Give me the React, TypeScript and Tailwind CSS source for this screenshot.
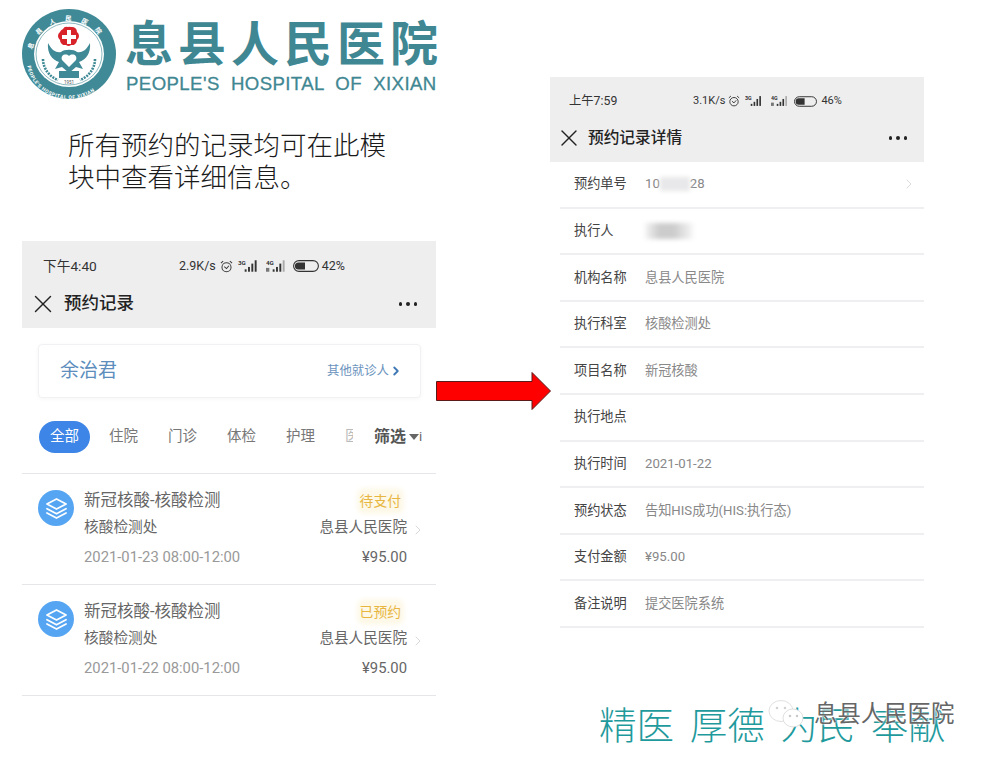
import { X, ChevronRight } from 'lucide-react';

const SANS = "font-['Roboto','Noto_Sans_CJK_SC',sans-serif]";

interface RecordItem {
  status: string;
  date: string;
}

const records: RecordItem[] = [
  { status: '待支付', date: '2021-01-23 08:00-12:00' },
  { status: '已预约', date: '2021-01-22 08:00-12:00' },
];

const detailRows = [
  { label: '机构名称', value: '息县人民医院' },
  { label: '执行科室', value: '核酸检测处' },
  { label: '项目名称', value: '新冠核酸' },
  { label: '执行地点', value: '' },
  { label: '执行时间', value: '2021-01-22' },
  { label: '预约状态', value: '告知HIS成功(HIS:执行态)' },
  { label: '支付金额', value: '¥95.00' },
  { label: '备注说明', value: '提交医院系统' },
];

function Logo() {
  return (
    <svg viewBox="0 0 94 90" className="w-[94px] h-[90px] shrink-0">
      <defs>
        <path id="topArc" d="M10 47 A37 35 0 0 1 84 47" />
        <path id="bottomArc" d="M5 52 A42 38 0 0 0 89 52" />
      </defs>
      <ellipse cx="47" cy="45" rx="47" ry="45" fill="#3f8a96" />
      <ellipse cx="47" cy="45" rx="35" ry="33" fill="#fff" />
      <ellipse cx="47" cy="45" rx="33" ry="31" fill="none" stroke="#3f8a96" strokeWidth="0.6" />
      <text fontSize="6.5" fill="#fff" fontWeight="700" letterSpacing="9">
        <textPath href="#topArc" startOffset="6">息县人民医院</textPath>
      </text>
      <text fontSize="5" fill="#fff" fontWeight="700" letterSpacing="0.5">
        <textPath href="#bottomArc" startOffset="5">PEOPLE'S HOSPITAL OF XIXIAN</textPath>
      </text>
      <path
        d="M41 20 a4 4 0 0 1 5 -2 a4 4 0 0 1 3 0 a5 5 0 0 1 6 5 a5 5 0 0 1 0 8 a5 5 0 0 1 -6 5 a4 4 0 0 1 -5 0 a5 5 0 0 1 -6 -5 a5 5 0 0 1 0 -8 a5 5 0 0 1 3 -3z"
        fill="#d9232a"
      />
      <path d="M45 21h4v5h5v4h-5v5h-4v-5h-5v-4h5z" fill="#fff" />
      <path
        d="M26 34 C25 44 30 51 37 53 L33 60 L40 58 L47 64 L54 58 L61 60 L57 53 C64 51 69 44 68 34 C64 42 59 44 55 43 C52 40 42 40 39 43 C35 44 30 42 26 34z"
        fill="#3f8a96"
      />
      <path d="M47 58 L40 51 C38 46 44 44 47 47 C50 44 56 46 54 51z" fill="#fff" />
      <rect x="37" y="62" width="20" height="7" fill="#3f8a96" />
      <text x="47" y="75" textAnchor="middle" fontSize="4.5" fill="#555">1951</text>
      <path d="M21 50 C21 60 28 68 36 71" fill="none" stroke="#3f8a96" strokeWidth="2.6" strokeDasharray="2 1" />
      <path d="M73 50 C73 60 66 68 58 71" fill="none" stroke="#3f8a96" strokeWidth="2.6" strokeDasharray="2 1" />
    </svg>
  );
}

function Alarm({ className }: { className: string }) {
  return (
    <svg viewBox="0 0 14 14" className={className} fill="none" stroke="#3a3a3a" strokeWidth="1.1">
      <circle cx="7" cy="7.8" r="4.9" />
      <path d="M4.6 7.2l2.4 2 2.6-3" />
      <path d="M1 3.4L3.4 1.2M13 3.4L10.6 1.2" />
    </svg>
  );
}

function Signal({ tag, dim, className }: { tag: string; dim?: boolean; className: string }) {
  return (
    <svg viewBox="0 0 22 14" className={className}>
      <text x="0" y="6" fontSize="6.5" fontWeight="700" fill="#333">{tag}</text>
      <rect x="7" y="10.5" width="2" height="2.5" fill="#333" />
      <rect x="10.5" y="8" width="2" height="5" fill="#333" />
      <rect x="14" y="4.5" width="2" height="8.5" fill="#333" />
      <rect x="17.5" y="1" width="2" height="12" fill={dim ? '#aaa' : '#333'} />
      {dim ? <rect x="0" y="9" width="3.5" height="4" fill="#777" /> : null}
    </svg>
  );
}

function Battery({ className }: { className: string }) {
  return (
    <svg viewBox="0 0 26 12" className={className}>
      <rect x="0.6" y="0.6" width="24.8" height="10.8" rx="5.4" fill="none" stroke="#333" strokeWidth="1.1" />
      <path d="M5.5 2.4h6.5v7.2h-6.5a3.6 3.6 0 0 1 0-7.2z" fill="#333" />
    </svg>
  );
}

function TopBar({ time, speed, battery, title, small }: {
  time: string;
  speed: string;
  battery: string;
  title: string;
  small?: boolean;
}) {
  return (
    <div className={small ? 'bg-[#eeeeef] pl-[19px] pr-[17px] pb-[11px]' : 'bg-[#eeeeef] pl-[21px] pr-[19px] pb-[11px]'}>
      <div className={small ? 'h-[48px] flex items-center text-[#333] text-[11px]' : 'h-[50px] flex items-center text-[#333] text-[12.5px]'}>
        <span className={small ? 'w-[124px] shrink-0 text-[12.3px]' : 'w-[136px] shrink-0 text-[13.7px]'}>{time}</span>
        <span>{speed}</span>
        {small ? (
          <span className="flex items-center ml-[3px]">
            <Alarm className="w-[12px] h-[12px]" />
            <Signal tag="3G" className="w-[18px] h-[12px] ml-[5px]" />
            <Signal tag="4G" dim className="w-[18px] h-[12px] ml-[8px]" />
            <Battery className="w-[23px] h-[11px] ml-[5px]" />
          </span>
        ) : (
          <span className="flex items-center ml-[4px]">
            <Alarm className="w-[13px] h-[13px]" />
            <Signal tag="3G" className="w-[21px] h-[14px] ml-[5px]" />
            <Signal tag="4G" dim className="w-[21px] h-[14px] ml-[7px]" />
            <Battery className="w-[26px] h-[12px] ml-[6px]" />
          </span>
        )}
        <span className={small ? 'ml-[4px]' : 'ml-[3px]'}>{battery}</span>
      </div>
      <div className="h-[26px] flex items-center">
        <X className={small ? 'w-[28px] h-[28px] text-[#222] -ml-[14px] shrink-0' : 'w-[30px] h-[30px] text-[#222] -ml-[15.5px] shrink-0'} strokeWidth={1.15} />
        <span className={small ? 'ml-[5px] text-[15.7px] font-medium text-[#222] leading-none' : 'ml-[6.5px] text-[17.5px] font-medium text-[#222] leading-none'}>{title}</span>
        <span className="ml-auto flex gap-[4px]">
          <i className="w-[3.5px] h-[3.5px] rounded-full bg-[#222]" />
          <i className="w-[3.5px] h-[3.5px] rounded-full bg-[#222]" />
          <i className="w-[3.5px] h-[3.5px] rounded-full bg-[#222]" />
        </span>
      </div>
    </div>
  );
}

function StackIcon() {
  return (
    <div className="w-[36px] h-[36px] rounded-full bg-[#55a5f2] flex items-center justify-center shrink-0">
      <svg viewBox="0 0 24 24" className="w-[27px] h-[27px]" fill="none" stroke="#fff" strokeWidth="1.5" strokeLinejoin="round" strokeLinecap="round">
        <path d="M12 3.5l8.5 4.5-8.5 4.5-8.5-4.5z" />
        <path d="M3.5 12.2l8.5 4.5 8.5-4.5" />
        <path d="M3.5 16l8.5 4.5 8.5-4.5" />
      </svg>
    </div>
  );
}

function RecordCard({ item }: { item: RecordItem }) {
  return (
    <div className="h-[111px] border-b border-[#e6e6ea] pl-[16px] pt-[16px] flex relative">
      <StackIcon />
      <div className="ml-[10px] flex-1 flex flex-col text-[#666]">
        <span className="text-[16.5px] leading-[22px] whitespace-nowrap">新冠核酸-核酸检测</span>
        <span className="text-[14.7px] leading-[22px] mt-[4px]">核酸检测处</span>
        <span className="text-[14.8px] leading-[22px] mt-[8px] text-[#999] whitespace-nowrap">{item.date}</span>
      </div>
      <div className="w-[100px] mr-[29px] flex flex-col items-end text-[#666]">
        <span className="text-[13.8px] leading-[20px] my-[1px] mr-[6px] text-[#e8b63f] bg-[#fdf8e8] shadow-[0_0_5px_3px_#fdf8e8] rounded">{item.status}</span>
        <span className="text-[14.6px] leading-[22px] mt-[4px] whitespace-nowrap">息县人民医院</span>
        <span className="text-[14.8px] leading-[22px] mt-[8px]">¥95.00</span>
      </div>
      <ChevronRight className="absolute right-[10px] top-[44px] w-[16px] h-[24px] text-[#d8d8d8]" strokeWidth={1.5} />
    </div>
  );
}

function DetailRow({ label, children }: { label: string; children?: React.ReactNode }) {
  return (
    <div className="h-[46.6px] ml-[10px] border-b-2 border-[#efeff1] flex items-center text-[13.2px]">
      <span className="ml-[14px] w-[71px] text-[#444]">{label}</span>
      <span className="text-[#888] flex items-center flex-1">{children}</span>
    </div>
  );
}

const tabs = ['住院', '门诊', '体检', '护理'];

export default function App() {
  return (
    <div className={`w-[986px] h-[757px] bg-white overflow-hidden flex relative ${SANS}`}>
      <div className="w-[414px] ml-[22px] shrink-0 flex flex-col">
        <div className="flex pt-[9px]">
          <Logo />
          <div className="ml-[9px] w-[313px] shrink-0 text-[#3f8792]">
            <div className="flex justify-between pt-[8px] text-[48px] leading-[56px] font-bold">
              <span>息</span><span>县</span><span>人</span><span>民</span><span>医</span><span>院</span>
            </div>
            <div className="font-['Liberation_Sans',sans-serif] text-[18.6px] leading-[22px] whitespace-pre ml-[1px] tracking-[0.42px] [-webkit-text-stroke:0.3px_#3f8792]">
              PEOPLE'S  HOSPITAL  OF  XIXIAN
            </div>
          </div>
        </div>
        <p className="ml-[46px] mt-[31px] w-[330px] text-[26.5px] leading-[32px] text-[#1a1a1a] font-light">
          所有预约的记录均可在此模块中查看详细信息。
        </p>
        <div className="mt-[47px]">
          <TopBar time="下午4:40" speed="2.9K/s" battery="42%" title="预约记录" />
          <div className="mt-[16px] ml-[16px] mr-[15px] h-[54px] rounded border border-[#f1f1f4] shadow-[0_1px_4px_rgba(0,0,0,0.04)] flex items-center pl-[21px] pr-[19px]">
            <span className="text-[19px] text-[#5c8dbd]">余治君</span>
            <span className="ml-auto text-[12.4px] text-[#6b93bd]">其他就诊人</span>
            <ChevronRight className="w-[14px] h-[18px] -mr-[2px] text-[#3f79b5]" strokeWidth={3.2} />
          </div>
          <div className="mt-[23px] ml-[17px] h-[32px] flex items-center">
            <span className="w-[51px] h-[32px] rounded-full bg-[#3d85e6] text-white text-[14.5px] flex items-center justify-center">全部</span>
            <div className="w-[19px]" />
            <div className="flex gap-[30px] text-[14.5px] text-[#777]">
              {tabs.map(tab => (
                <span key={tab} className="w-[29px] whitespace-nowrap">{tab}</span>
              ))}
            </div>
            <span className="ml-[30px] w-[8px] overflow-hidden text-[14.5px] text-[#bbb] whitespace-nowrap">医</span>
            <span className="ml-[21px] text-[16px] font-bold text-[#555] whitespace-nowrap">筛选</span>
            <i className="ml-[3px] w-0 h-0 border-x-[5px] border-t-[6px] border-x-transparent border-t-[#666]" />
            <span className="text-[13px] text-[#666]">i</span>
          </div>
          <div className="mt-[20px] border-t border-[#e6e6ea]">
            {records.map(item => (
              <RecordCard key={item.date} item={item} />
            ))}
          </div>
        </div>
      </div>

      <svg viewBox="0 0 116 40" className="w-[116px] h-[40px] mt-[371px] shrink-0">
        <path d="M0.5 10.5H96V1.5L114.5 20 96 38.5V29.5H0.5z" fill="#fe0000" stroke="#5a1a1a" strokeWidth="1" />
      </svg>

      <div className="w-[374px] -ml-[2px] mt-[77px] shrink-0 flex flex-col">
        <TopBar time="上午7:59" speed="3.1K/s" battery="46%" title="预约记录详情" small />
        <DetailRow label="预约单号">
          <span>10</span>
          <span className="w-[30px] h-[14px] bg-[#e8e8ea] blur-[2px]" />
          <span>28</span>
          <ChevronRight className="ml-auto mr-[7px] w-[16px] h-[24px] text-[#dcdcdc]" strokeWidth={1.5} />
        </DetailRow>
        <DetailRow label="执行人">
          <span className="w-[48px] h-[16px] bg-[linear-gradient(90deg,#f4f4f4,#ccc_30%,#ccc_60%,#f6f6f6)] blur-[2px]" />
        </DetailRow>
        {detailRows.map(row => (
          <DetailRow key={row.label} label={row.label}>{row.value}</DetailRow>
        ))}
        <div className="ml-[49px] mt-[76px] w-[370px] whitespace-pre text-[37.5px] leading-[44px] font-light [word-spacing:6.5px] text-[#1f9a9c]">
          精医 厚德 为民 奉献
        </div>
      </div>

      <div className="absolute left-[768px] top-[698px] flex items-center">
        <svg viewBox="0 0 40 34" className="w-[40px] h-[34px]" fill="#fff" stroke="#d8d8d8" strokeWidth="0.8">
          <ellipse cx="13" cy="13" rx="12" ry="10.5" />
          <ellipse cx="25" cy="20" rx="10" ry="9" />
          <circle cx="22" cy="18" r="0.9" fill="#888" />
          <circle cx="29" cy="18" r="0.9" fill="#888" />
          <circle cx="9" cy="10" r="0.9" fill="#aaa" />
          <circle cx="17" cy="10" r="0.9" fill="#aaa" />
        </svg>
        <span className="ml-[6px] text-[23.4px] leading-none text-[#666] whitespace-nowrap [text-shadow:0_0_2px_#fff,0_0_2px_#fff]">息县人民医院</span>
      </div>
    </div>
  );
}
